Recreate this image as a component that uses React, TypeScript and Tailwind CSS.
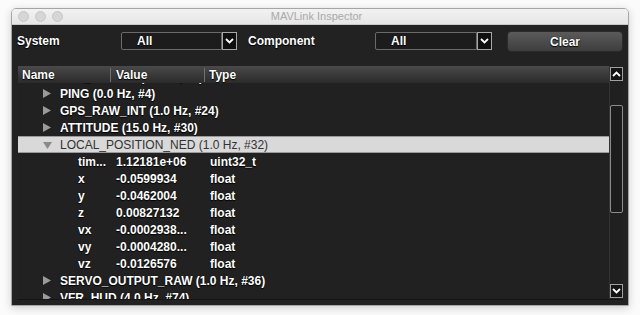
import React from "react";

const FONT = { fontFamily: '"Liberation Sans", Arial, sans-serif' };
const SH = { textShadow: "0 1px 1px #000, 0 0 1px #000" };

function Chevron({ up = false }: { up?: boolean }) {
  return (
    <svg width="9" height="6" viewBox="0 0 9 6">
      <polyline
        points={up ? "1,5 4.5,1.5 8,5" : "1,1 4.5,4.5 8,1"}
        fill="none"
        stroke="#fff"
        strokeWidth="1.8"
      />
    </svg>
  );
}

function Tri({ down = false, color = "#9a9a9a" }: { down?: boolean; color?: string }) {
  return down ? (
    <svg width="9" height="8" viewBox="0 0 9 8">
      <polygon points="0,1 9,1 4.5,8" fill={color} />
    </svg>
  ) : (
    <svg width="8" height="9" viewBox="0 0 8 9">
      <polygon points="0,0 8,4.5 0,9" fill={color} />
    </svg>
  );
}

function Combo({ w }: { w: string }) {
  return (
    <div className={`flex h-[18px] shrink-0 ${w}`}>
      <div className="flex-1 bg-[#1c1c1c] border border-[#6a6a6a] rounded-l-[2px] flex items-start pt-[1px] pl-[15px] text-white font-bold text-[12px] leading-[14px]" style={SH}>
        All
      </div>
      <div className="w-[15px] bg-[#101010] border border-[#a8a8a8] flex items-center justify-center">
        <Chevron />
      </div>
    </div>
  );
}

type Msg = { kind: "msg"; text: string; open?: boolean; selected?: boolean };
type Field = { kind: "field"; name: string; value: string; type: string };

const rows: (Msg | Field)[] = [
  { kind: "msg", text: "SYS_STATUS (1.0 Hz, #1)" },
  { kind: "msg", text: "PING (0.0 Hz, #4)" },
  { kind: "msg", text: "GPS_RAW_INT (1.0 Hz, #24)" },
  { kind: "msg", text: "ATTITUDE (15.0 Hz, #30)" },
  { kind: "msg", text: "LOCAL_POSITION_NED (1.0 Hz, #32)", open: true, selected: true },
  { kind: "field", name: "tim...", value: "1.12181e+06", type: "uint32_t" },
  { kind: "field", name: "x", value: "-0.0599934", type: "float" },
  { kind: "field", name: "y", value: "-0.0462004", type: "float" },
  { kind: "field", name: "z", value: "0.00827132", type: "float" },
  { kind: "field", name: "vx", value: "-0.0002938...", type: "float" },
  { kind: "field", name: "vy", value: "-0.0004280...", type: "float" },
  { kind: "field", name: "vz", value: "-0.0126576", type: "float" },
  { kind: "msg", text: "SERVO_OUTPUT_RAW (1.0 Hz, #36)" },
  { kind: "msg", text: "VFR_HUD (4.0 Hz, #74)" },
];

export default function App() {
  return (
    <div className="w-[640px] h-[315px] bg-[#fbfbfb] overflow-hidden pt-[8px] pl-[11px]" style={FONT}>
      <div className="w-[618px] h-[298px] rounded-t-[5px] border border-[#a5a5a5] flex flex-col overflow-hidden shadow-[0_2px_8px_rgba(0,0,0,0.18)]">
        {/* title bar */}
        <div className="h-[16px] bg-gradient-to-b from-[#f2f2f2] to-[#e6e6e6] border-b border-[#c8c8c8] flex items-center shrink-0">
          <div className="flex gap-[6px] pl-[6px]">
            <div className="w-[11px] h-[11px] rounded-full bg-[#d6d6d6] border border-[#c6c6c6]" />
            <div className="w-[11px] h-[11px] rounded-full bg-[#d6d6d6] border border-[#c6c6c6]" />
            <div className="w-[11px] h-[11px] rounded-full bg-[#d6d6d6] border border-[#c6c6c6]" />
          </div>
          <div className="flex-1 text-center text-[11px] text-[#a9a9a9] pr-[58px] leading-none">MAVLink Inspector</div>
        </div>
        {/* body */}
        <div className="flex-1 bg-[#222222] flex flex-col">
          {/* toolbar */}
          <div className="h-[41px] flex items-start pt-[7px] pl-[5px] shrink-0">
            <div className="w-[104px] shrink-0 h-[18px] leading-[18px] text-white font-bold text-[12px]" style={SH}>System</div>
            <Combo w="w-[116px]" />
            <div className="w-[138px] shrink-0 pl-[11px] h-[18px] leading-[18px] text-white font-bold text-[12px]" style={SH}>Component</div>
            <Combo w="w-[117px]" />
            <div className="ml-[15px] mt-[-1px] shrink-0 w-[116px] h-[21px] rounded-[4px] border border-[#2b2b2b] bg-gradient-to-b from-[#5a5a5a] to-[#3e3e3e] flex items-center justify-center text-white font-bold text-[12px]" style={SH}>
              Clear
            </div>
          </div>
          {/* table */}
          <div className="ml-[6px] mr-[5px] h-[234px] flex border-b border-[#151515]">
            <div className="w-[591px] flex flex-col">
              <div className="h-[17px] shrink-0 bg-gradient-to-b from-[#4a4a4a] to-[#2b2b2b] flex items-center text-white font-bold text-[12px]" style={SH}>
                <div className="w-[93px] pl-[4px] border-r border-[#707070] h-[14px] leading-[14px]">Name</div>
                <div className="w-[94px] pl-[5px] border-r border-[#707070] h-[14px] leading-[14px]">Value</div>
                <div className="pl-[4px] h-[14px] leading-[14px]">Type</div>
              </div>
              <div className="flex-1 overflow-hidden bg-[#212121]">
                <div className="mt-[-15px]">
                  {rows.map((r, i) =>
                    r.kind === "msg" ? (
                      <div
                        key={i}
                        className={`h-[17px] flex items-center text-[12px] whitespace-nowrap ${r.selected ? "bg-[#d9d9d9] text-[#333] border-y border-[#9a9a9a]" : "text-white font-bold"}`}
                        style={r.selected ? undefined : SH}
                      >
                        <div className="w-[42px] pl-[25px] flex items-center">
                          <Tri down={r.open} color={r.selected ? "#8a8a8a" : "#9a9a9a"} />
                        </div>
                        <span>{r.text}</span>
                      </div>
                    ) : (
                      <div key={i} className="h-[17px] flex items-center text-[12px] text-white font-bold whitespace-nowrap" style={SH}>
                        <div className="w-[98px] pl-[60px]">{r.name}</div>
                        <div className="w-[94px]">{r.value}</div>
                        <div>{r.type}</div>
                      </div>
                    )
                  )}
                </div>
              </div>
            </div>
            {/* scrollbar */}
            <div className="w-[14px] flex flex-col border-l border-[#333] bg-[#202020]">
              <div className="mt-[1px] h-[14px] w-[13px] border border-[#a0a0a0] bg-[#141414] flex items-center justify-center">
                <Chevron up />
              </div>
              <div className="mt-[24px] h-[108px] w-[13px] border border-[#8c8c8c] rounded-[2px] bg-[#1c1c1c]" />
              <div className="flex-1" />
              <div className="mb-[1px] h-[14px] w-[13px] border border-[#a0a0a0] bg-[#141414] flex items-center justify-center">
                <Chevron />
              </div>
            </div>
          </div>
          <div className="flex-1" />
        </div>
      </div>
    </div>
  );
}
